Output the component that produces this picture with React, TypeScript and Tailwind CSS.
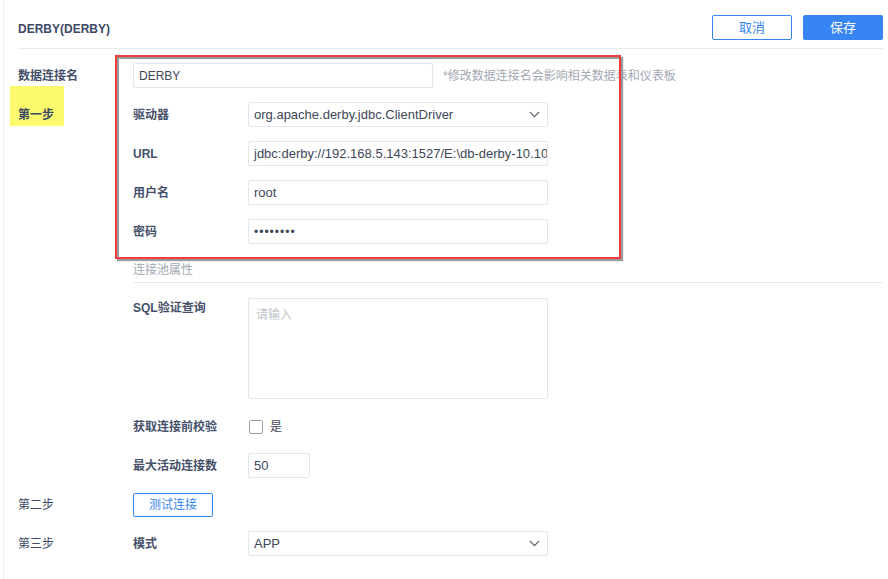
import { ChevronDown } from "lucide-react"

const font = "font-['Helvetica_Neue','Liberation_Sans','Noto_Sans_CJK_SC',sans-serif]"

function Field({ value, className = "" }: { value: string; className?: string }) {
  return (
    <div
      className={`h-[25px] border border-[#e4e6ea] rounded-[2px] px-[5px] flex items-center text-[#3d4757] whitespace-nowrap overflow-hidden ${className}`}
    >
      {value}
    </div>
  )
}

function Select({ value }: { value: string }) {
  return (
    <div className="h-[25px] w-[300px] border border-[#e4e6ea] rounded-[2px] pl-[5px] pr-[4px] flex items-center justify-between text-[13px] text-[#3d4757]">
      <span>{value}</span>
      <ChevronDown size={17} strokeWidth={1.6} className="text-[#4a5568]" />
    </div>
  )
}

function Row({
  step,
  label,
  children,
  highlight,
}: {
  step?: string
  label?: string
  children: React.ReactNode
  highlight?: boolean
}) {
  return (
    <div className="flex items-center h-[39px]">
      <div className={`w-[115px] relative text-[12px] text-[#3d4966] ${highlight ? "font-semibold" : ""}`}>
        {highlight && <div className="absolute left-[-8px] top-[-20px] w-[54px] h-[40px] bg-[#fbfa6c]" />}
        <span className="relative">{step}</span>
      </div>
      <div className="w-[115px] text-[12px] text-[#46506a] font-semibold">{label}</div>
      <div className="flex items-center">{children}</div>
    </div>
  )
}

export default function App() {
  return (
    <div className={`${font} w-[888px] h-[579px] bg-white relative overflow-hidden`}>
      <div className="absolute left-[3px] top-0 bottom-0 w-px bg-[#eef0f3]" />
      <div className="pl-[18px] pr-[5px]">
        {/* Header */}
        <div className="h-[49px] flex items-end justify-between pb-[8px] border-b border-[#e8eaee]">
          <div className="text-[12px] font-bold text-[#3d4966] leading-[25px] relative top-[2px]">DERBY(DERBY)</div>
          <div className="flex gap-[11px]">
            <button className="w-[80px] h-[25px] rounded-[2px] border border-[#3685f2] text-[#3685f2] text-[13px] bg-white">
              取消
            </button>
            <button className="w-[80px] h-[25px] rounded-[2px] bg-[#3685f2] text-white text-[13px]">保存</button>
          </div>
        </div>

        <div className="pt-[7px]">
          <div className="flex items-center h-[39px]">
            <div className="w-[115px] text-[12px] text-[#46506a] font-semibold">数据连接名</div>
            <Field value="DERBY" className="w-[300px] text-[12px]" />
            <span className="ml-[10px] text-[12px] text-[#a3a8b3]">*修改数据连接名会影响相关数据表和仪表板</span>
          </div>
          <Row step="第一步" label="驱动器" highlight>
            <Select value="org.apache.derby.jdbc.ClientDriver" />
          </Row>
          <Row label="URL">
            <Field value="jdbc:derby://192.168.5.143:1527/E:\db-derby-10.10." className="w-[300px] text-[13px]" />
          </Row>
          <Row label="用户名">
            <Field value="root" className="w-[300px] text-[13px]" />
          </Row>
          <Row label="密码">
            <Field value="••••••••" className="w-[300px] text-[12px] tracking-[1px]" />
          </Row>

          <div className="ml-[115px] mt-[10px] pb-[3px] border-b border-[#e8eaee] text-[12px] text-[#a3a8b3]">
            连接池属性
          </div>

          <div className="flex mt-[15px] h-[101px]">
            <div className="w-[115px]" />
            <div className="w-[115px] text-[12px] text-[#46506a] font-semibold pt-[1px]">SQL验证查询</div>
            <div className="w-[300px] h-[101px] border border-[#e4e6ea] rounded-[2px] px-[7px] pt-[7px] text-[12px] text-[#c0c4cc]">
              请输入
            </div>
          </div>

          <div className="mt-[8px]">
            <Row label="获取连接前校验">
              <div className="w-[14px] h-[14px] border border-[#9aa1ad] rounded-[2px] ml-[1px]" />
              <span className="ml-[7px] text-[12px] text-[#3d4757]">是</span>
            </Row>
            <Row label="最大活动连接数">
              <Field value="50" className="w-[62px] h-[24px] text-[13px]" />
            </Row>
            <Row step="第二步">
              <div className="-ml-[115px]">
                <button className="w-[80px] h-[24px] rounded-[2px] border border-[#3685f2] text-[#3685f2] text-[12px] bg-white">
                  测试连接
                </button>
              </div>
            </Row>
            <Row step="第三步" label="模式">
              <Select value="APP" />
            </Row>
          </div>
        </div>
      </div>

      {/* annotation box */}
      <div className="absolute left-[115px] top-[55px] w-[506px] h-[204px] border-2 border-[#f03c3c] shadow-[inset_2px_2px_0_#9a9a9a,2px_2px_1px_#9a9a9a]" />
    </div>
  )
}
